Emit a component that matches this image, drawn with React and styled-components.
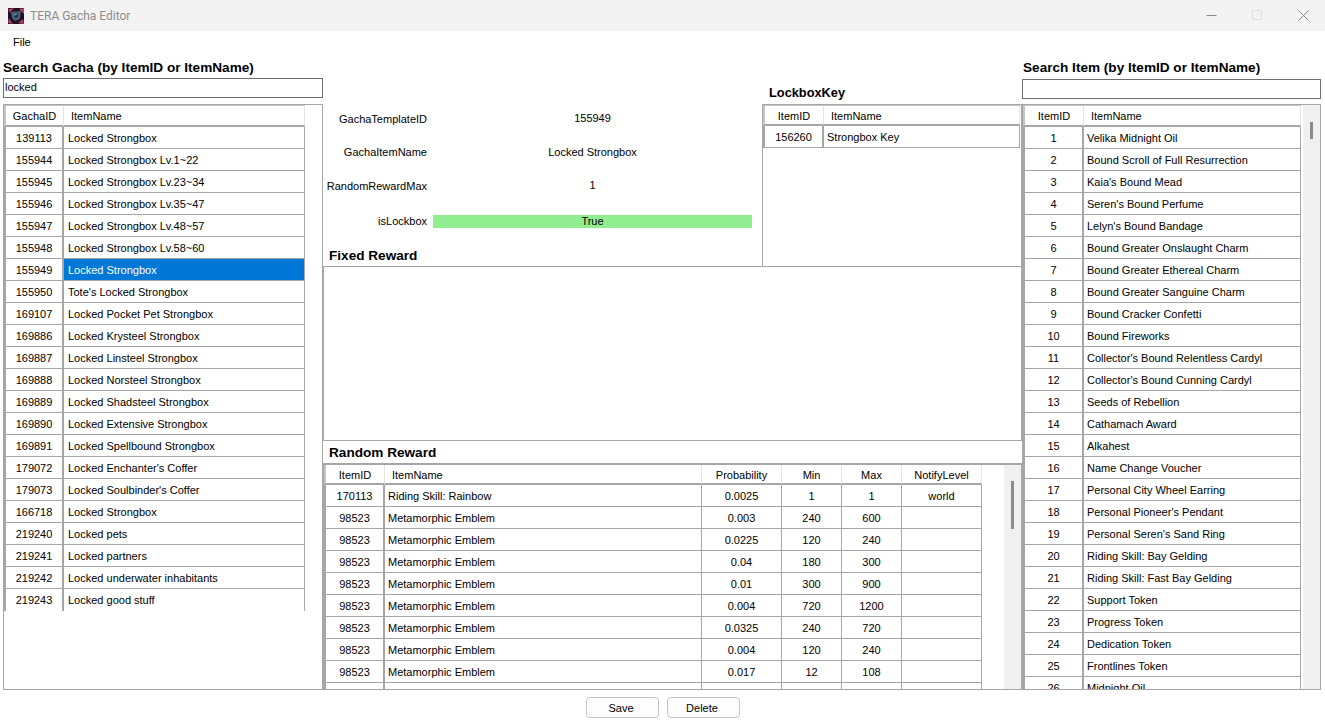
import React from 'react';
import styled, { createGlobalStyle } from 'styled-components';

const GlobalStyle = createGlobalStyle`
  html, body {
    margin: 0;
    padding: 0;
    background: #fff;
  }
  * {
    box-sizing: border-box;
  }
`;

const line = '#a6a6a6';

const Window = styled.div`
  width: 1325px;
  height: 720px;
  display: flex;
  flex-direction: column;
  overflow: hidden;
  background: #fff;
  color: #000;
  font-family: "Liberation Sans", Arial, sans-serif;
  font-size: 11px;
`;

const TitleBar = styled.div`
  height: 31px;
  flex: none;
  display: flex;
  align-items: center;
  padding-left: 8px;
  background: #f3f3f3;
`;

const TitleText = styled.span`
  margin-left: 6px;
  color: #8c8c8c;
  font-family: Roboto, sans-serif;
  font-size: 12px;
`;

const WinButtons = styled.div`
  margin-left: auto;
  display: flex;
  padding-right: 16px;
  gap: 35px;
`;

const MenuBar = styled.div`
  height: 24px;
  flex: none;
  padding: 5px 0 0 13px;
`;

const Body = styled.div`
  height: 635px;
  flex: none;
  display: grid;
  grid-template-columns: 320px 699px 299px;
  margin-left: 3px;
`;

const SideColumn = styled.div`
  display: flex;
  flex-direction: column;
  min-height: 0;
`;

const Heading = styled.div`
  font-weight: 700;
  font-size: 13.6px;
  line-height: 16px;
`;

const SearchHeading = styled(Heading)`
  height: ${p => p.$height}px;
  padding: 5px 0 0 ${p => p.$indent || 0}px;
  white-space: nowrap;
`;

const SearchInput = styled.input`
  display: block;
  width: 100%;
  height: 20px;
  margin-bottom: ${p => p.$gap}px;
  padding: 0 0 2px 1px;
  border: 1px solid #6e6e6e;
  border-radius: 0;
  outline: none;
  font: inherit;
  color: #000;
`;

const ListBox = styled.div`
  flex: 1;
  min-height: 0;
  display: flex;
  overflow: hidden;
  border: 1px solid ${line};
`;

const CenterColumn = styled.div`
  display: flex;
  flex-direction: column;
  min-height: 0;
`;

const TopRow = styled.div`
  height: 211px;
  flex: none;
  display: flex;
`;

const InfoColumn = styled.div`
  width: 439px;
  flex: none;
  display: flex;
  flex-direction: column;
  padding-top: 47px;
`;

const InfoRow = styled.div`
  display: grid;
  grid-template-columns: 104px 319px;
  column-gap: 6px;
  align-items: center;
  height: 33.5px;
  margin-top: ${p => (p.$last ? 2 : 0)}px;
`;

const InfoLabel = styled.div`
  text-align: right;
  white-space: nowrap;
`;

const InfoValue = styled.div`
  text-align: center;
  line-height: 13px;
  background: ${p => (p.$flag ? '#90ee90' : 'transparent')};
`;

const SectionHeading = styled(Heading)`
  padding-left: 6px;
  margin-top: ${p => p.$top || 0}px;
`;

const LockboxColumn = styled.div`
  width: 260px;
  flex: none;
  display: flex;
  flex-direction: column;
`;

const LockboxHeading = styled(Heading)`
  height: 49px;
  padding: 30px 0 0 7px;
  font-size: 12.8px;
`;

const LockboxBox = styled(ListBox)`
  border-bottom: none;
`;

const FixedPanel = styled.div`
  height: 175px;
  flex: none;
  border: 1px solid ${line};
`;

const RandomHeading = styled(SectionHeading)`
  height: 22px;
  flex: none;
  padding-top: 4px;
`;

const RandomBox = styled(ListBox)`
  border-top-width: 2px;
`;

const Grid = styled.div`
  flex: none;
  align-self: flex-start;
  border-top: ${p => (p.$ruled ? '1px solid #c4c4c4' : 'none')};
`;

const Row = styled.div`
  display: grid;
  grid-template-columns: ${p => p.$cols};
  height: ${p => p.$height || 22}px;
`;

const HeaderCell = styled.div`
  display: flex;
  align-items: center;
  justify-content: ${p => (p.$left ? 'flex-start' : 'center')};
  padding-left: ${p => (p.$left ? 7 : 0)}px;
  padding-top: ${p => (p.$nudge ? 2 : 0)}px;
  border-left: ${p => (p.$first ? '2px solid #c4c4c4' : 'none')};
  border-right: 1px solid #e4e4e4;
  border-bottom: 2px solid ${line};
  white-space: nowrap;
`;

const Cell = styled.div`
  display: flex;
  align-items: center;
  justify-content: ${p => (p.$left ? 'flex-start' : 'center')};
  padding-left: ${p => (p.$left ? p.$pad : 0)}px;
  border-right: ${p => (p.$first ? 2 : 1)}px solid ${line};
  border-left: ${p => (p.$first ? `2px solid ${line}` : 'none')};
  border-bottom: ${p => (p.$noLine ? 'none' : `1px solid ${line}`)};
  background: ${p => (p.$selected ? '#0078d7' : 'transparent')};
  color: ${p => (p.$selected ? '#fff' : '#000')};
  white-space: nowrap;
  overflow: hidden;
`;

const ScrollTrack = styled.div`
  width: 17px;
  flex: none;
  margin-left: auto;
  background: #f0f0f0;
  display: flex;
  justify-content: center;
`;

const ScrollThumb = styled.div`
  width: 3px;
  height: ${p => p.$height}px;
  margin-top: ${p => p.$top}px;
  background: #8b8b8b;
`;

const Footer = styled.div`
  flex: 1;
  display: flex;
  justify-content: center;
  align-items: flex-start;
  gap: 8px;
  padding: 7px 0 0;
`;

const Button = styled.button`
  width: 73px;
  height: 21px;
  padding: 0 2px 0 0;
  border: 1px solid #c4c4c4;
  border-radius: 4px;
  background: #fdfdfd;
  color: #000;
  font: inherit;
`;

const gachaRows = [
  ['139113', 'Locked Strongbox'],
  ['155944', 'Locked Strongbox Lv.1~22'],
  ['155945', 'Locked Strongbox Lv.23~34'],
  ['155946', 'Locked Strongbox Lv.35~47'],
  ['155947', 'Locked Strongbox Lv.48~57'],
  ['155948', 'Locked Strongbox Lv.58~60'],
  ['155949', 'Locked Strongbox'],
  ['155950', "Tote's Locked Strongbox"],
  ['169107', 'Locked Pocket Pet Strongbox'],
  ['169886', 'Locked Krysteel Strongbox'],
  ['169887', 'Locked Linsteel Strongbox'],
  ['169888', 'Locked Norsteel Strongbox'],
  ['169889', 'Locked Shadsteel Strongbox'],
  ['169890', 'Locked Extensive Strongbox'],
  ['169891', 'Locked Spellbound Strongbox'],
  ['179072', "Locked Enchanter's Coffer"],
  ['179073', "Locked Soulbinder's Coffer"],
  ['166718', 'Locked Strongbox'],
  ['219240', 'Locked pets'],
  ['219241', 'Locked partners'],
  ['219242', 'Locked underwater inhabitants'],
  ['219243', 'Locked good stuff'],
];

const itemNames = [
  'Velika Midnight Oil',
  'Bound Scroll of Full Resurrection',
  "Kaia's Bound Mead",
  "Seren's Bound Perfume",
  "Lelyn's Bound Bandage",
  'Bound Greater Onslaught Charm',
  'Bound Greater Ethereal Charm',
  'Bound Greater Sanguine Charm',
  'Bound Cracker Confetti',
  'Bound Fireworks',
  "Collector's Bound Relentless Cardyl",
  "Collector's Bound Cunning Cardyl",
  'Seeds of Rebellion',
  'Cathamach Award',
  'Alkahest',
  'Name Change Voucher',
  'Personal City Wheel Earring',
  "Personal Pioneer's Pendant",
  "Personal Seren's Sand Ring",
  'Riding Skill: Bay Gelding',
  'Riding Skill: Fast Bay Gelding',
  'Support Token',
  'Progress Token',
  'Dedication Token',
  'Frontlines Token',
  'Midnight Oil',
];

const rewardRows = [
  ['170113', 'Riding Skill: Rainbow', '0.0025', '1', '1', 'world'],
  ['98523', 'Metamorphic Emblem', '0.003', '240', '600', ''],
  ['98523', 'Metamorphic Emblem', '0.0225', '120', '240', ''],
  ['98523', 'Metamorphic Emblem', '0.04', '180', '300', ''],
  ['98523', 'Metamorphic Emblem', '0.01', '300', '900', ''],
  ['98523', 'Metamorphic Emblem', '0.004', '720', '1200', ''],
  ['98523', 'Metamorphic Emblem', '0.0325', '240', '720', ''],
  ['98523', 'Metamorphic Emblem', '0.004', '120', '240', ''],
  ['98523', 'Metamorphic Emblem', '0.017', '12', '108', ''],
  ['98523', 'Metamorphic Emblem', '0.008', '60', '120', ''],
];

const DataGrid = ({ cols, headers, rows, selected, leftCols = [1], openEnd, ruled = true, headHeight = 21, pad = 3 }) => (
  <Grid $ruled={ruled}>
    <Row $cols={cols} $height={headHeight}>
      {headers.map((h, i) => (
        <HeaderCell key={h} $first={i === 0} $left={leftCols.includes(i)} $nudge={headHeight < 21}>{h}</HeaderCell>
      ))}
    </Row>
    {rows.map((row, r) => (
      <Row $cols={cols} key={r}>
        {row.map((val, i) => (
          <Cell
            key={i}
            $first={i === 0}
            $left={leftCols.includes(i)}
            $pad={pad}
            $selected={selected === r && i === 1}
            $noLine={openEnd && r === rows.length - 1}
          >
            {val}
          </Cell>
        ))}
      </Row>
    ))}
  </Grid>
);

const AppIcon = () => (
  <svg width="16" height="16" viewBox="0 0 16 16">
    <rect width="16" height="16" fill="#1d1420" />
    <path d="M0 1 L6 0 L2 5 Z M16 0 L16 6 L11 1 Z M0 15 L5 16 L1 10 Z M16 16 L10 15 L15 11 Z" fill="#b23a68" />
    <path d="M3 4 L13 3 L12 11 L7 13 L4 10 Z" fill="#46607e" />
    <path d="M6 6 L10 5 L10 9 L7 10 Z" fill="#20303f" />
    <path d="M6 7 L9 6" stroke="#9db4c8" strokeWidth="1" />
  </svg>
);

const WinIcon = ({ children }) => (
  <svg width="11" height="11" viewBox="0 0 11 11" fill="none">{children}</svg>
);

const App = () => (
  <Window>
    <GlobalStyle />
    <TitleBar>
      <AppIcon />
      <TitleText>TERA Gacha Editor</TitleText>
      <WinButtons>
        <WinIcon><path d="M0.5 5.5 H10.5" stroke="#8a8a8a" /></WinIcon>
        <WinIcon><rect x="0.5" y="0.5" width="9" height="9" rx="1" stroke="#dcdcdc" /></WinIcon>
        <WinIcon><path d="M0.5 0.5 L10.5 10.5 M10.5 0.5 L0.5 10.5" stroke="#8a8a8a" /></WinIcon>
      </WinButtons>
    </TitleBar>
    <MenuBar>File</MenuBar>
    <Body>
      <SideColumn>
        <SearchHeading $height={23}>Search Gacha (by ItemID or ItemName)</SearchHeading>
        <SearchInput defaultValue="locked" $gap={6} />
        <ListBox>
          <DataGrid
            cols="60px 241px"
            headers={['GachaID', 'ItemName']}
            rows={gachaRows}
            selected={6}
            openEnd
            pad={4}
          />
        </ListBox>
      </SideColumn>

      <CenterColumn>
        <TopRow>
          <InfoColumn>
            <InfoRow>
              <InfoLabel>GachaTemplateID</InfoLabel>
              <InfoValue>155949</InfoValue>
            </InfoRow>
            <InfoRow>
              <InfoLabel>GachaItemName</InfoLabel>
              <InfoValue>Locked Strongbox</InfoValue>
            </InfoRow>
            <InfoRow>
              <InfoLabel>RandomRewardMax</InfoLabel>
              <InfoValue>1</InfoValue>
            </InfoRow>
            <InfoRow $last>
              <InfoLabel>isLockbox</InfoLabel>
              <InfoValue $flag>True</InfoValue>
            </InfoRow>
            <SectionHeading $top={10}>Fixed Reward</SectionHeading>
          </InfoColumn>
          <LockboxColumn>
            <LockboxHeading>LockboxKey</LockboxHeading>
            <LockboxBox>
              <DataGrid
                cols="61px 196px"
                headers={['ItemID', 'ItemName']}
                rows={[['156260', 'Strongbox Key']]}
                headHeight={20}
              />
            </LockboxBox>
          </LockboxColumn>
        </TopRow>
        <FixedPanel />
        <RandomHeading>Random Reward</RandomHeading>
        <RandomBox>
          <DataGrid
            cols="61px 317px 80px 60px 60px 80px"
            headers={['ItemID', 'ItemName', 'Probability', 'Min', 'Max', 'NotifyLevel']}
            rows={rewardRows}
            ruled={false}
            headHeight={20}
          />
          <ScrollTrack>
            <ScrollThumb $top={16} $height={48} />
          </ScrollTrack>
        </RandomBox>
      </CenterColumn>

      <SideColumn>
        <SearchHeading $height={24} $indent={1}>Search Item (by ItemID or ItemName)</SearchHeading>
        <SearchInput $gap={5} />
        <ListBox>
          <DataGrid
            cols="61px 217px"
            headers={['ItemID', 'ItemName']}
            rows={itemNames.map((name, i) => [String(i + 1), name])}
          />
          <ScrollTrack>
            <ScrollThumb $top={17} $height={17} />
          </ScrollTrack>
        </ListBox>
      </SideColumn>
    </Body>
    <Footer>
      <Button>Save</Button>
      <Button>Delete</Button>
    </Footer>
  </Window>
);

export default App;
